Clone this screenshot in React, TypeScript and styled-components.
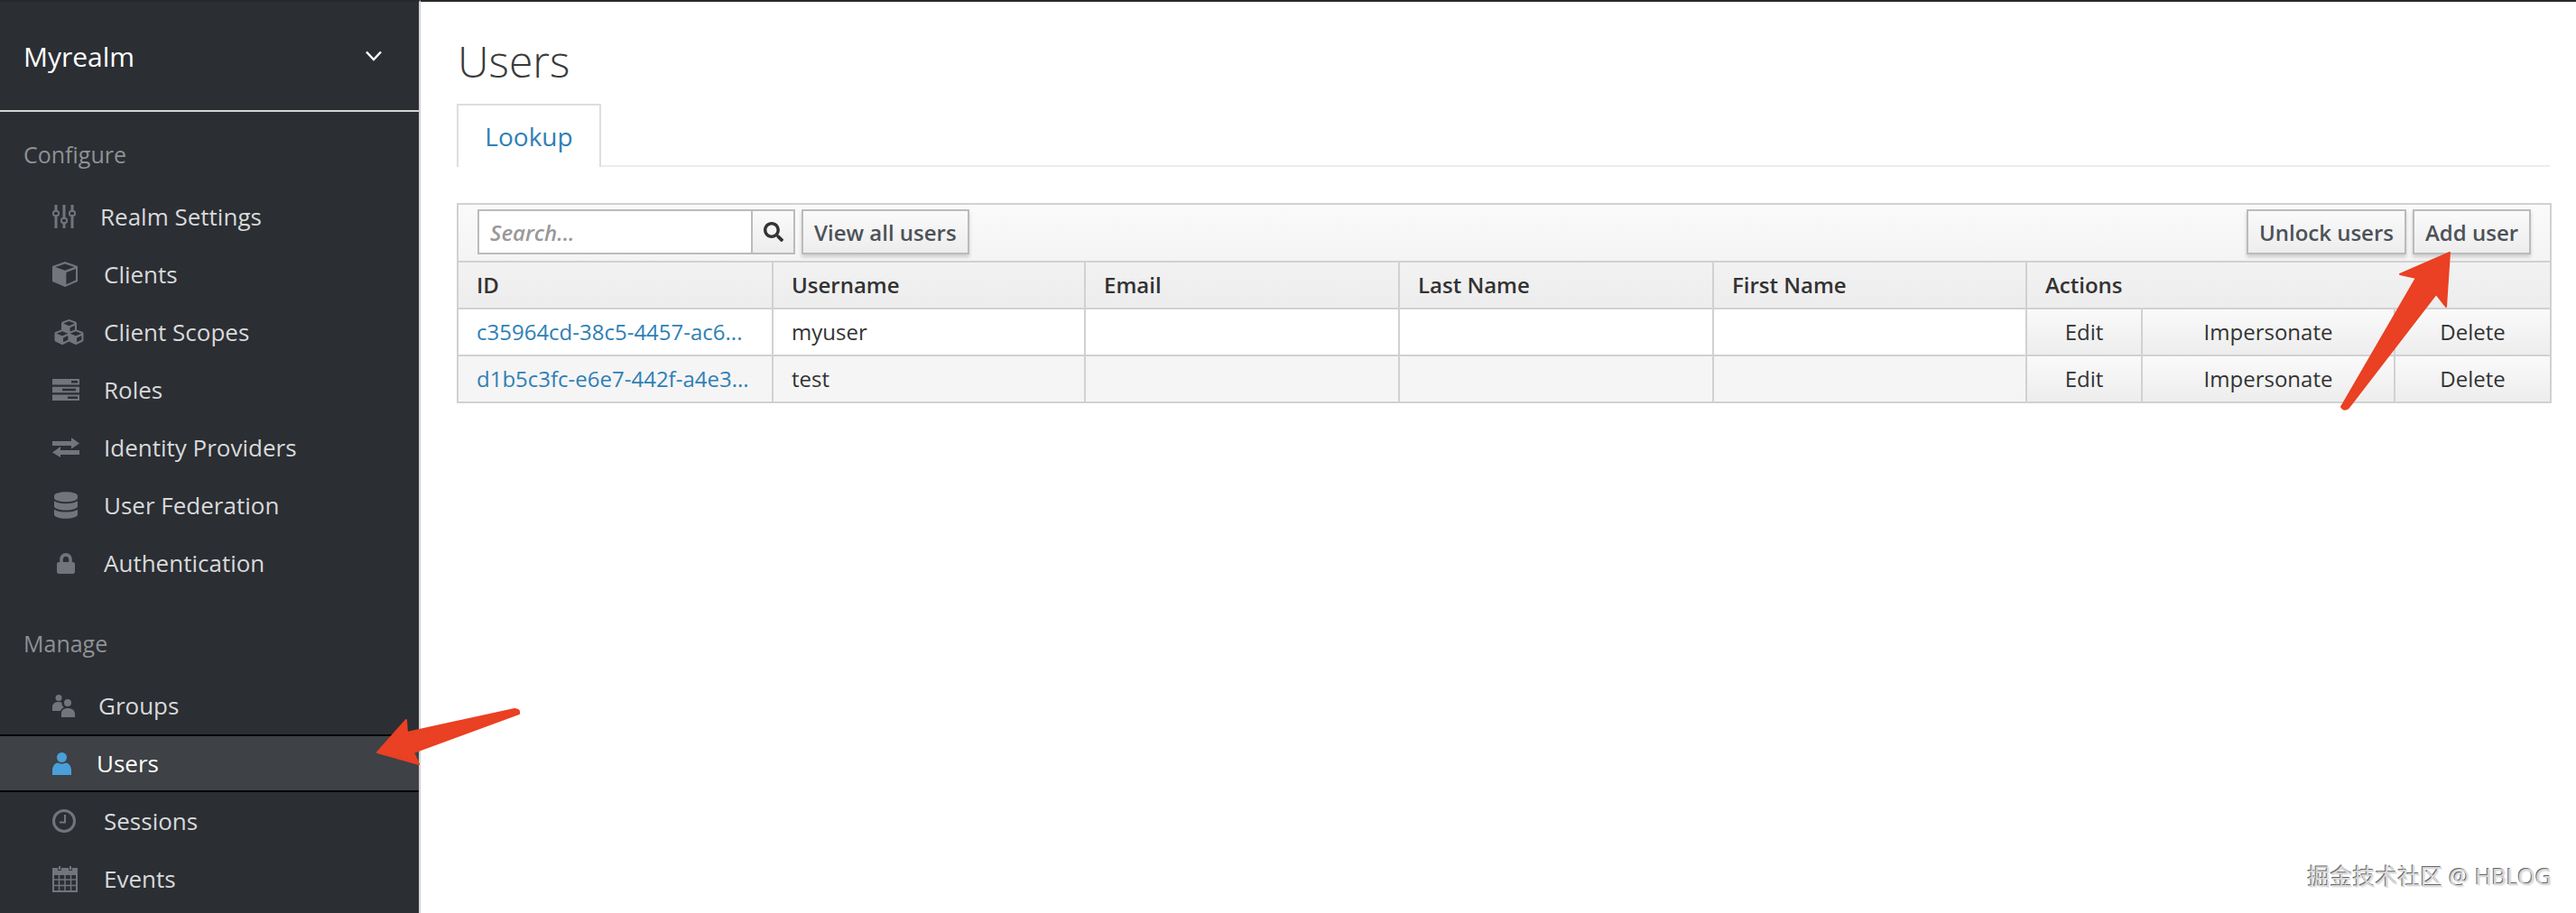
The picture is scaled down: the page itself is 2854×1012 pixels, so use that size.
import React from "react";
import styled, { createGlobalStyle } from "styled-components";
import { FaCubes, FaDatabase, FaLock, FaSearch } from "react-icons/fa";

const Global = createGlobalStyle`
  html, body { margin: 0; padding: 0; background: #fff; }
  body { font-family: "Open Sans", "Noto Sans", sans-serif; }
  * { box-sizing: border-box; }
`;

const Page = styled.div`
  position: relative;
  display: flex;
  width: 2854px;
  height: 1012px;
  overflow: hidden;
`;

const Sidebar = styled.aside`
  width: 466px;
  height: 1012px;
  flex: none;
  background: #2b2e33;
  border-right: 2px solid #d1d1d1;
  border-top: 2px solid #26282c;
`;

const RealmBar = styled.div`
  height: 122px;
  display: flex;
  align-items: center;
  justify-content: space-between;
  padding: 0 41px 0 26px;
  border-bottom: 2px solid #d4d4d4;
  color: #fff;
  font-size: 30px;
`;

const Section = styled.div<{ $top: number }>`
  height: 45px;
  margin-top: ${(p) => p.$top}px;
  padding-left: 26px;
  line-height: 45px;
  color: #8f9194;
  font-size: 25px;
`;

const NavList = styled.nav<{ $top: number }>`
  display: flex;
  flex-direction: column;
  margin-top: ${(p) => p.$top}px;
`;

const NavItem = styled.a<{ $active?: boolean }>`
  display: flex;
  align-items: center;
  height: 64px;
  padding-left: 58px;
  font-size: 26px;
  color: ${(p) => (p.$active ? "#fff" : "#d8d9da")};
  background: ${(p) => (p.$active ? "#3e4145" : "transparent")};
  border-top: 2px solid ${(p) => (p.$active ? "#050505" : "transparent")};
  border-bottom: 2px solid ${(p) => (p.$active ? "#050505" : "transparent")};
`;

const IconSlot = styled.span<{ $w: number; $color?: string }>`
  display: flex;
  align-items: center;
  flex: none;
  width: ${(p) => p.$w}px;
  color: ${(p) => p.$color ?? "#72757b"};
`;

const Main = styled.main`
  flex: 1;
  min-width: 0;
  border-top: 2px solid #26282c;
  padding: 0 29px 0 40px;
`;

const Title = styled.h1`
  margin: 0;
  height: 113px;
  padding: 32px 0 0 1px;
  font-size: 48px;
  line-height: 68px;
  font-weight: 300;
  color: #3a3a3a;
`;

const Tabs = styled.div`
  display: flex;
  height: 70px;
  border-bottom: 2px solid #ececec;
`;

const Tab = styled.a`
  width: 160px;
  height: 70px;
  display: flex;
  align-items: center;
  justify-content: center;
  font-size: 28px;
  color: #2f7fb5;
  background: #fff;
  border: 2px solid #dedede;
  border-bottom: none;
`;

const Table = styled.table`
  margin-top: 40px;
  width: 2319px;
  table-layout: fixed;
  border-collapse: collapse;
  font-size: 24px;
  color: #333;
`;

const ToolbarCell = styled.td`
  height: 64px;
  padding: 0 0 2px;
  border: 2px solid #d1d1d1;
  background: linear-gradient(#fafafa, #f4f4f4);
`;

const Toolbar = styled.div`
  display: flex;
  align-items: center;
  justify-content: space-between;
  padding: 0 21px;
`;

const Group = styled.div`
  display: flex;
  align-items: center;
  gap: 7px;
`;

const SearchBox = styled.div`
  display: flex;
  width: 352px;
  height: 50px;
  border: 2px solid #bbb;
  background: #fff;
`;

const SearchInput = styled.input`
  flex: 1;
  min-width: 0;
  border: 0;
  padding: 0 12px;
  background: transparent;
  font: italic 600 24px "Open Sans", sans-serif;
  outline: none;
  &::placeholder { color: #999; opacity: 1; }
`;

const SearchButton = styled.span`
  width: 47px;
  display: flex;
  align-items: center;
  justify-content: center;
  color: #333;
  border-left: 2px solid #bbb;
  background: linear-gradient(#fafafa, #ededed);
`;

const Button = styled.button`
  height: 50px;
  padding: 0 12px;
  border: 2px solid #bbb;
  background: linear-gradient(#fafafa, #ededed);
  box-shadow: 0 3px 4px rgba(0, 0, 0, 0.16);
  color: #4d5258;
  font: 600 24px "Open Sans", sans-serif;
  white-space: nowrap;
`;

const Head = styled.th`
  height: 52px;
  padding: 0 20px 2px;
  text-align: left;
  font-weight: 600;
  border: 2px solid #d1d1d1;
  background: linear-gradient(#f2f2f2, #ededed);
`;

const Cell = styled.td<{ $alt?: boolean }>`
  height: 52px;
  padding: 0 19px 2px 20px;
  border: 2px solid #d1d1d1;
  white-space: nowrap;
  overflow: hidden;
  background: ${(p) => (p.$alt ? "#f5f5f5" : "#fff")};
`;

const ActionCell = styled.td`
  height: 52px;
  padding: 0 0 2px;
  text-align: center;
  border: 2px solid #d1d1d1;
  background: linear-gradient(#fafafa, #ededed);
`;

const IdLink = styled.a`
  color: #2f7fb5;
`;

const Arrows = styled.svg`
  position: absolute;
  inset: 0;
  width: 2854px;
  height: 1012px;
  pointer-events: none;
`;

const Watermark = styled.div`
  position: absolute;
  right: 27px;
  bottom: 24px;
  font: 25px "Noto Sans", "Noto Sans CJK SC", sans-serif;
  color: #d8d8d8;
  text-shadow: -1px -1px 0 #666, 1px 1px 0 #eee;
  white-space: nowrap;
`;

const Sliders = () => (
  <svg width="26" height="26" viewBox="0 0 26 26" fill="currentColor">
    <path d="M2.5 0h3v6h-3zM2.5 13h3v13h-3zM11.5 0h3v14h-3zM11.5 21h3v5h-3zM20.5 0h3v6h-3zM20.5 13h3v13h-3z" />
    <g fill="none" stroke="currentColor" strokeWidth="2">
      <rect x="1" y="7" width="6" height="5" rx="2" />
      <rect x="10" y="15" width="6" height="5" rx="2" />
      <rect x="19" y="7" width="6" height="5" rx="2" />
    </g>
  </svg>
);

const Cube = () => (
  <svg width="28" height="28" viewBox="0 0 28 28">
    <path fill="currentColor" d="M14 0 28 5v17l-14 6-14-6V5z" />
    <path fill="#2b2e33" d="M14 2.4 24.6 6 14 9.8 3.4 6zM15.4 12 26 8v12.6L15.4 25.2z" />
  </svg>
);

const Service = () => (
  <svg width="30" height="24" viewBox="0 0 30 24">
    <path fill="currentColor" fillRule="evenodd" d="M0 0h30v6.5H0zM21 2v2.500h7V2zM0 8.700h30v6.500H0zM11 10.700v2.500h15v-2.500zM0 17.500h30V24H0zM17 19.500V22h11v-2.500z" />
  </svg>
);

const Exchange = () => (
  <svg width="30" height="22" viewBox="0 0 30 22" fill="currentColor">
    <path d="M0 4h21V0l9 6.500-9 6V9H0zM30 14H9v-4l-9 6.500 9 5.500V19h21z" />
  </svg>
);

const Users = () => (
  <svg width="25" height="25" viewBox="0 0 25 25" fill="currentColor">
    <circle cx="7" cy="3.500" r="3.500" />
    <circle cx="17" cy="9" r="4" />
    <path d="M0 18v-4.500C0 10 3 8 7 8c1.500 0 2.500.3 3.500.8-.4 3 1 4.700 2.500 5.200-2 1-3.500 2-4 4zM10 25v-4c0-4 3-6 7-6s8 2 8 6v4z" />
  </svg>
);

const User = () => (
  <svg width="21" height="25" viewBox="0 0 21 25" fill="currentColor">
    <circle cx="10.500" cy="5.500" r="5.500" />
    <path d="M0 25v-5c0-5 3-8 6-8.500 2.500 1.500 6.500 1.500 9 0 3 .5 6 3.500 6 8.500v5z" />
  </svg>
);

const Clock = () => (
  <svg width="26" height="30" viewBox="0 0 26 30" fill="none" stroke="currentColor">
    <circle cx="13" cy="15" r="11.500" strokeWidth="3" />
    <path d="M14 8v8.500H8" strokeWidth="2" />
  </svg>
);

const Calendar = () => (
  <svg width="28" height="30" viewBox="0 0 28 30" fill="none" stroke="currentColor">
    <path d="M1 4h26v25H1z" strokeWidth="2" />
    <path fill="currentColor" stroke="none" d="M0 3h28v8H0z" />
    <path d="M8 0v6M20 0v6" strokeWidth="3.500" stroke="#2b2e33" />
    <path d="M8 1v4M20 1v4" strokeWidth="2" />
    <path d="M1 16h26M1 22.500h26M7.500 11v18M14 11v18M20.500 11v18" strokeWidth="1.500" />
  </svg>
);

const configure = [
  { label: "Realm Settings", w: 53, icon: <Sliders /> },
  { label: "Clients", w: 57, icon: <Cube /> },
  { label: "Client Scopes", w: 57, icon: <FaCubes style={{ width: 37, height: 32 }} /> },
  { label: "Roles", w: 57, icon: <Service /> },
  { label: "Identity Providers", w: 57, icon: <Exchange /> },
  { label: "User Federation", w: 57, icon: <FaDatabase style={{ marginLeft: 2, width: 26, height: 30 }} /> },
  { label: "Authentication", w: 57, icon: <FaLock style={{ marginLeft: 5, width: 20, height: 25 }} /> },
];

const ids = [
  { id: "c35964cd-38c5-4457-ac6...", name: "myuser" },
  { id: "d1b5c3fc-e6e7-442f-a4e3...", name: "test" },
];

const widths = [349, 346, 348, 348, 347, 128, 280, 173];

export default function App() {
  return (
    <Page>
      <Global />
      <Sidebar>
        <RealmBar>
          <span>Myrealm</span>
          <svg width="18" height="12" viewBox="0 0 18 12" fill="none" stroke="#fff" strokeWidth="2.500">
            <path d="M1 1.500 9 10l8-8.500" />
          </svg>
        </RealmBar>
        <Section $top={25}>Configure</Section>
        <NavList $top={14}>
          {configure.map((c) => (
            <NavItem key={c.label}>
              <IconSlot $w={c.w}>{c.icon}</IconSlot>
              {c.label}
            </NavItem>
          ))}
        </NavList>
        <Section $top={35}>Manage</Section>
        <NavList $top={14}>
          <NavItem>
            <IconSlot $w={51}><Users /></IconSlot>Groups
          </NavItem>
          <NavItem $active>
            <IconSlot $w={49} $color="#4a9fd8"><User /></IconSlot>Users
          </NavItem>
          <NavItem>
            <IconSlot $w={57}><Clock /></IconSlot>Sessions
          </NavItem>
          <NavItem>
            <IconSlot $w={57}><Calendar /></IconSlot>Events
          </NavItem>
        </NavList>
      </Sidebar>
      <Main>
        <Title>Users</Title>
        <Tabs>
          <Tab>Lookup</Tab>
        </Tabs>
        <Table>
          <colgroup>
            {widths.map((w, i) => (
              <col key={i} width={w} />
            ))}
          </colgroup>
          <thead>
            <tr>
              <ToolbarCell colSpan={8}>
                <Toolbar>
                  <Group>
                    <SearchBox>
                      <SearchInput placeholder="Search..." />
                      <SearchButton><FaSearch size={22} /></SearchButton>
                    </SearchBox>
                    <Button>View all users</Button>
                  </Group>
                  <Group>
                    <Button>Unlock users</Button>
                    <Button>Add user</Button>
                  </Group>
                </Toolbar>
              </ToolbarCell>
            </tr>
            <tr>
              <Head>ID</Head>
              <Head>Username</Head>
              <Head>Email</Head>
              <Head>Last Name</Head>
              <Head>First Name</Head>
              <Head colSpan={3}>Actions</Head>
            </tr>
          </thead>
          <tbody>
            {ids.map((r, i) => (
              <tr key={r.id}>
                <Cell $alt={i === 1}><IdLink>{r.id}</IdLink></Cell>
                <Cell $alt={i === 1}>{r.name}</Cell>
                <Cell $alt={i === 1} />
                <Cell $alt={i === 1} />
                <Cell $alt={i === 1} />
                <ActionCell>Edit</ActionCell>
                <ActionCell>Impersonate</ActionCell>
                <ActionCell>Delete</ActionCell>
              </tr>
            ))}
          </tbody>
        </Table>
      </Main>
      <Arrows viewBox="0 0 2854 1012">
        <path fill="#ea4023" stroke="#ea4023" strokeWidth="2" strokeLinejoin="round" d="M418 834 450 798 451 812 570 786Q576 786 575 791L458 834 464 847Z" />
        <path fill="#ea4023" stroke="#ea4023" strokeWidth="2" strokeLinejoin="round" d="M2714 280 2710 340 2699 326 2602 452Q2597 456 2594 451L2677 308 2659 304Z" />
      </Arrows>
      <Watermark>掘金技术社区 @ HBLOG</Watermark>
    </Page>
  );
}
